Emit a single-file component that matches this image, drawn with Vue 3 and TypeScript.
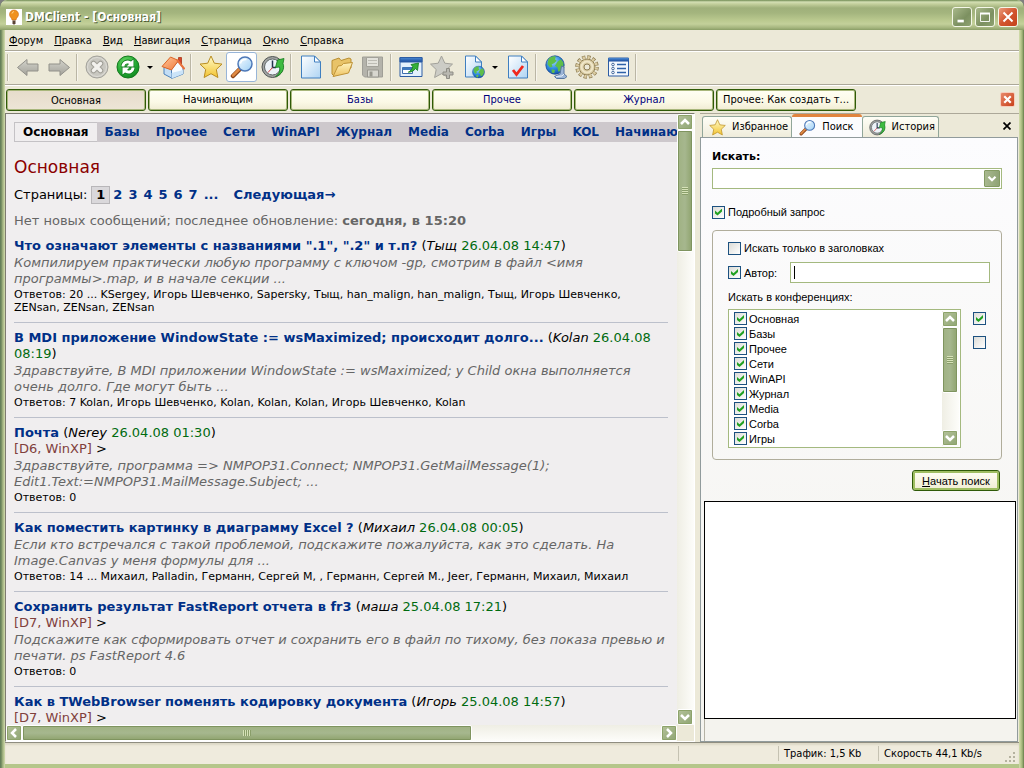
<script setup lang="ts">
import { ref } from 'vue'

interface Tool {
  kind: 'button' | 'sep' | 'drop'
  icon?: string
  label?: string
  active?: boolean
}
interface Topic {
  title: string
  author: string
  date: string
  system?: string
  body?: string
  replies?: string
}

const menu = [
  ['Ф', 'орум'],
  ['П', 'равка'],
  ['В', 'ид'],
  ['Н', 'авигация'],
  ['С', 'траница'],
  ['О', 'кно'],
  ['С', 'правка'],
]

const tools: Tool[] = [
  { kind: 'sep' },
  { kind: 'button', icon: 'back', label: 'Назад' },
  { kind: 'button', icon: 'forward', label: 'Вперёд' },
  { kind: 'sep' },
  { kind: 'button', icon: 'stop', label: 'Остановить' },
  { kind: 'button', icon: 'refresh', label: 'Обновить' },
  { kind: 'drop', label: 'Варианты обновления' },
  { kind: 'button', icon: 'home', label: 'Домой' },
  { kind: 'sep' },
  { kind: 'button', icon: 'star', label: 'Избранное' },
  { kind: 'button', icon: 'search', label: 'Поиск', active: true },
  { kind: 'button', icon: 'history', label: 'История' },
  { kind: 'sep' },
  { kind: 'button', icon: 'page', label: 'Создать' },
  { kind: 'button', icon: 'folder', label: 'Открыть' },
  { kind: 'button', icon: 'save', label: 'Сохранить' },
  { kind: 'sep' },
  { kind: 'button', icon: 'window', label: 'Новое окно' },
  { kind: 'button', icon: 'staradd', label: 'Добавить в избранное' },
  { kind: 'button', icon: 'pageglobe', label: 'Открыть в браузере' },
  { kind: 'drop', label: 'Выбор браузера' },
  { kind: 'button', icon: 'pagecheck', label: 'Отметить прочитанным' },
  { kind: 'sep' },
  { kind: 'button', icon: 'globe', label: 'Соединение' },
  { kind: 'button', icon: 'gear', label: 'Настройки' },
  { kind: 'button', icon: 'list', label: 'Свойства' },
  { kind: 'sep' },
]

const docs = ['Основная', 'Начинающим', 'Базы', 'Прочее', 'Журнал', 'Прочее: Как создать т...']
const forums = ['Базы', 'Прочее', 'Сети', 'WinAPI', 'Журнал', 'Media', 'Corba', 'Игры', 'KOL', 'Начинающим']
const pages = ['2', '3', '4', '5', '6', '7', '...']

const topics: Topic[] = [
  {
    title: 'Что означают элементы с названиями ".1", ".2" и т.п?',
    author: 'Тыщ',
    date: '26.04.08 14:47',
    body: 'Компилируем практически любую программу с ключом -gp, смотрим в файл <имя\nпрограммы>.map, и в начале секции ...',
    replies: 'Ответов: 20 ... KSergey, Игорь Шевченко, Sapersky, Тыщ, han_malign, han_malign, Тыщ, Игорь Шевченко,\nZENsan, ZENsan, ZENsan',
  },
  {
    title: 'В MDI приложение WindowState := wsMaximized; происходит долго...',
    author: 'Kolan',
    date: '26.04.08 08:19',
    body: 'Здравствуйте, В MDI приложении WindowState := wsMaximized; у Child окна выполняется\nочень долго. Где могут быть ...',
    replies: 'Ответов: 7 Kolan, Игорь Шевченко, Kolan, Kolan, Kolan, Игорь Шевченко, Kolan',
  },
  {
    title: 'Почта',
    author: 'Nerey',
    date: '26.04.08 01:30',
    system: '[D6, WinXP]',
    body: 'Здравствуйте, программа => NMPOP31.Connect; NMPOP31.GetMailMessage(1);\nEdit1.Text:=NMPOP31.MailMessage.Subject; ...',
    replies: 'Ответов: 0',
  },
  {
    title: 'Как поместить картинку в диаграмму Excel ?',
    author: 'Михаил',
    date: '26.04.08 00:05',
    body: 'Если кто встречался с такой проблемой, подскажите пожалуйста, как это сделать. На\nImage.Canvas у меня формулы для ...',
    replies: 'Ответов: 14 ... Михаил, Palladin, Германн, Сергей М, , Германн, Сергей М., Jeer, Германн, Михаил, Михаил',
  },
  {
    title: 'Сохранить результат FastReport отчета в fr3',
    author: 'маша',
    date: '25.04.08 17:21',
    system: '[D7, WinXP]',
    body: 'Подскажите как сформировать отчет и сохранить его в файл по тихому, без показа превью и\nпечати. ps FastReport 4.6',
    replies: 'Ответов: 0',
  },
  {
    title: 'Как в TWebBrowser поменять кодировку документа',
    author: 'Игорь',
    date: '25.04.08 14:57',
    system: '[D7, WinXP]',
  },
]

const query = ref('')
const detailed = ref(true)
const onlyTitles = ref(false)
const byAuthor = ref(true)
const author = ref('')
const conferences = ref(
  ['Основная', 'Базы', 'Прочее', 'Сети', 'WinAPI', 'Журнал', 'Media', 'Corba', 'Игры'].map((name) => ({
    name,
    on: true,
  })),
)
function setAll(on: boolean) {
  conferences.value.forEach((c) => (c.on = on))
}
</script>

<template>
  <svg class="defs" aria-hidden="true">
    <defs>
      <linearGradient id="gGray" x2="0" y2="1"><stop stop-color="#d3d3cb" /><stop offset="1" stop-color="#a3a29a" /></linearGradient>
      <linearGradient id="gPage" x2="1" y2="1"><stop stop-color="#ffffff" /><stop offset=".35" stop-color="#e3f0fb" /><stop offset="1" stop-color="#aed4f3" /></linearGradient>
      <linearGradient id="gStar" x2="0" y2="1"><stop stop-color="#fffbc8" /><stop offset="1" stop-color="#f3c431" /></linearGradient>
      <linearGradient id="gFold" x2="0" y2="1"><stop stop-color="#fff3bf" /><stop offset="1" stop-color="#edc362" /></linearGradient>
      <radialGradient id="gGreen" cx=".4" cy=".3" r=".8"><stop stop-color="#6fdc6c" /><stop offset=".6" stop-color="#22a832" /><stop offset="1" stop-color="#0b7f1c" /></radialGradient>
      <radialGradient id="gGlobe" cx=".4" cy=".3" r=".8"><stop stop-color="#a6dcff" /><stop offset=".5" stop-color="#2f8be0" /><stop offset="1" stop-color="#0d47a0" /></radialGradient>
      <linearGradient id="gLens" x2="1" y2="1"><stop stop-color="#f4fbff" /><stop offset="1" stop-color="#9fd0f5" /></linearGradient>
      <linearGradient id="gTitle" x2="0" y2="1"><stop stop-color="#4b8ad4" /><stop offset="1" stop-color="#1b4c9b" /></linearGradient>
      <linearGradient id="gRoof" x2="1" y2="1"><stop stop-color="#ffc79a" /><stop offset="1" stop-color="#f07a3c" /></linearGradient>
    </defs>
    <symbol id="i-back" viewBox="0 0 24 24">
      <path d="M1.500 12.500 11 4.500V9h11v7H11v4.500z" fill="url(#gGray)" stroke="#92918a" stroke-linejoin="round" />
    </symbol>
    <symbol id="i-forward" viewBox="0 0 24 24">
      <path d="M22.500 12.500 13 4.500V9H2v7h11v4.500z" fill="url(#gGray)" stroke="#92918a" stroke-linejoin="round" />
    </symbol>
    <symbol id="i-stop" viewBox="0 0 24 24">
      <circle cx="12" cy="12" r="11" fill="#c8c7c0" stroke="#a3a29b" />
      <circle cx="12" cy="12" r="9.500" fill="none" stroke="#deddd7" />
      <path d="m8.500 8.500 7 7m0-7-7 7" stroke="#a09f97" stroke-width="5.500" stroke-linecap="round" />
      <path d="m8.500 8.500 7 7m0-7-7 7" stroke="#f2f1ed" stroke-width="3.500" stroke-linecap="round" />
    </symbol>
    <symbol id="i-refresh" viewBox="0 0 24 24">
      <circle cx="12" cy="12" r="11" fill="url(#gGreen)" stroke="#16791f" />
      <g fill="#0f7d1c" stroke="#0f7d1c" stroke-width="1.500">
        <path d="M5.500 11.500C5.500 7 10.500 3.500 15 6.500L17.500 4.500v7h-7L13 9c-2-1.200-4.500 0-4.500 2.500z" />
        <path d="M18.500 12.500c0 4.500-5 8-9.500 5l-2.500 2v-7h7L11 15c2 1.200 4.500 0 4.500-2.500z" />
      </g>
      <g fill="#fff">
        <path d="M5.500 11.500C5.500 7 10.500 3.500 15 6.500L17.500 4.500v7h-7L13 9c-2-1.200-4.500 0-4.500 2.500z" />
        <path d="M18.500 12.500c0 4.500-5 8-9.500 5l-2.500 2v-7h7L11 15c2 1.200 4.500 0 4.500-2.500z" />
      </g>
    </symbol>
    <symbol id="i-home" viewBox="0 0 24 24">
      <path d="M3 12 10.500 14v9L3 19z" fill="#c3def5" stroke="#4a80bb" />
      <path d="M10.500 14 17 6.500l5 6v6.500l-11.500 4.500z" fill="#f6fbff" stroke="#4a80bb" />
      <path d="m10.500 18 11.500-3v4l-11.500 4.500z" fill="#cbe4f8" />
      <path d="M17.500 2.500h3V9l-3-3z" fill="#d8442a" stroke="#a93717" stroke-width=".8" />
      <path d="M1 11.500 9.500 2l8 3.500-7 9.500z" fill="url(#gRoof)" stroke="#db6426" stroke-linejoin="round" />
      <path d="m16.500 5.500 6.500 8" stroke="#e8713a" stroke-width="2" stroke-linecap="round" />
    </symbol>
    <symbol id="i-star" viewBox="0 0 24 24">
      <path d="m12 1 3.300 7.200 7.700.9-5.700 5.400 1.600 8L12 18.700 5.100 22.500l1.600-8L1 9.100l7.700-.9z" fill="url(#gStar)" stroke="#b98d22" stroke-linejoin="round" />
    </symbol>
    <symbol id="i-search" viewBox="0 0 24 24">
      <path d="m10 14-7 7" stroke="#8a4317" stroke-width="4.500" stroke-linecap="round" />
      <path d="m9.500 14-6.500 6.500" stroke="#e08a43" stroke-width="2.500" stroke-linecap="round" />
      <circle cx="15" cy="9" r="7" fill="url(#gLens)" stroke="#4d78b8" stroke-width="1.500" />
      <path d="M10.500 8.500c.5-3 3-4.500 6-4" fill="none" stroke="#fff" stroke-width="1.500" />
    </symbol>
    <symbol id="i-history" viewBox="0 0 24 24">
      <circle cx="11.500" cy="12" r="10.500" fill="#a2a4a3" stroke="#4f5454" />
      <circle cx="11.500" cy="12" r="8" fill="#edf3f8" stroke="#5e6666" />
      <path d="M11.500 5.500v7H15" fill="none" stroke="#22334c" stroke-width="1.500" />
      <path d="m11.500 12.500-4.500 5" stroke="#d63c3c" />
      <path d="M14.500 21.500c3.500-2 5-5.500 4-9.500l-4 .5L16.500 5l6.500-1.500-1 5c2 5-1 11.500-7.500 13z" fill="#3fbb41" stroke="#127a1c" stroke-width=".8" />
    </symbol>
    <symbol id="i-page" viewBox="0 0 24 24">
      <path d="M2.500 1h13l6 6v16h-19z" fill="url(#gPage)" stroke="#3f7fc0" />
      <path d="M15.500 1v6h6z" fill="#fff" stroke="#3f7fc0" />
    </symbol>
    <symbol id="i-folder" viewBox="0 0 24 24">
      <path d="M2 5.500 9 3l2 2.500L19 3l2 1v9L4 21 2 19z" fill="#e8c368" stroke="#b98e31" />
      <path d="M3 21.500 8 11l3.500-.5 2-2 9-1L18.500 18z" fill="url(#gFold)" stroke="#bf9336" />
    </symbol>
    <symbol id="i-save" viewBox="0 0 24 24">
      <path d="M1.500 2h20v20h-18l-2-2z" fill="#b4b3ab" stroke="#a09f97" />
      <path d="M5.500 2.500h12v9h-12z" fill="#e3e2db" stroke="#a2a199" />
      <path d="M7 5.500h9m-9 3h9" stroke="#bdbcb4" />
      <path d="M6.500 15h11v7h-11z" fill="#d8d7cf" stroke="#98978f" />
      <path d="M8.500 16.500h3v5h-3z" fill="#99988f" />
    </symbol>
    <symbol id="i-window" viewBox="0 0 24 24">
      <path d="M1 2.500h22v19H1z" fill="#e4f1fc" stroke="#2d5da4" />
      <path d="M1 2.500h22V7H1z" fill="url(#gTitle)" stroke="#2d5da4" />
      <path d="M3.500 12.500h10v6h-10z" fill="#fff" stroke="#3f6fae" />
      <path d="M3.500 12.500h10V15h-10z" fill="#3f78be" />
      <path d="m12 9.500 7.500-1.500-1 7.500-2-2c-1.700 2.500-4 3.700-7.200 3.700 2-1 3.700-3 4.500-5.500z" fill="#35b03a" stroke="#127a1c" stroke-width=".8" />
    </symbol>
    <symbol id="i-staradd" viewBox="0 0 24 24">
      <path d="m11.500 1 3.300 7.200 7.700.9-5.700 5.400 1.600 8-6.900-3.800-6.900 3.800 1.600-8L.5 9.100l7.700-.9z" fill="#ccccc6" stroke="#a3a29b" stroke-linejoin="round" />
      <path d="M16.500 13.500h3v3.500H23v3h-3.500v3.500h-3V20H13v-3h3.500z" fill="#b9b8b1" stroke="#8e8d85" />
    </symbol>
    <symbol id="i-worldball" viewBox="0 0 24 24">
      <circle cx="12" cy="12" r="11" fill="url(#gGlobe)" stroke="#1b4b93" />
      <path d="M4 5c3-3 6-4 9-3l-1 3 2 2-3 3-3 1 1 3-3 1-3-4zM15 8l4-3 3 4 0 5-3 5-3 1-1-5-3-2zM8 17l4 1-1 4-3-1z" fill="#5fbe4a" />
    </symbol>
    <symbol id="i-pageglobe" viewBox="0 0 24 24">
      <path d="M4.500 1h10l6 6v15h-16z" fill="url(#gPage)" stroke="#3f7fc0" />
      <path d="M14.500 1v6h6z" fill="#fff" stroke="#3f7fc0" />
      <use href="#i-worldball" x="11" y="10.500" width="13" height="13" />
    </symbol>
    <symbol id="i-pagecheck" viewBox="0 0 24 24">
      <path d="M2.500 1h13l6 6v16h-19z" fill="url(#gPage)" stroke="#3f7fc0" />
      <path d="M15.500 1v6h6z" fill="#fff" stroke="#3f7fc0" />
      <path d="m7 15 3.500 4.500L17 11" fill="none" stroke="#f0281c" stroke-width="2.800" />
    </symbol>
    <symbol id="i-globe" viewBox="0 0 24 24">
      <use href="#i-worldball" x="1" y="0" width="20" height="20" />
      <path d="m17.500 11 2.500 1v7l3 2.500-2.500 2h-8l-2-2 5.500-2.500z" fill="#9db6d8" stroke="#58779f" />
      <path d="m12 21.500 6-.5 2-2" fill="none" stroke="#e7eff8" />
    </symbol>
    <symbol id="i-gear" viewBox="0 0 24 24">
      <circle cx="12" cy="12" r="10" fill="none" stroke="#8b7a4f" stroke-width="3.500" stroke-dasharray="3.240 1.996" />
      <circle cx="12" cy="12" r="8" fill="#d8cba3" stroke="#8b7a4f" />
      <circle cx="12" cy="12" r="9.500" fill="none" stroke="#dccda3" stroke-width="3" stroke-dasharray="2.200 2.774" stroke-dashoffset="-.4" />
      <circle cx="12" cy="12" r="5.500" fill="none" stroke="#efe6c8" stroke-width="2" />
      <circle cx="12" cy="12" r="3" fill="#ece9d8" stroke="#8f7f57" />
    </symbol>
    <symbol id="i-list" viewBox="0 0 24 24">
      <path d="M2.500 3h20v18h-20z" fill="#f3f8fd" stroke="#2d5da4" />
      <path d="M2.500 3h20v3.500h-20z" fill="url(#gTitle)" />
      <path d="M11 9.500h9M11 13.500h9M11 17.500h9" stroke="#2f62a8" stroke-width="1.500" />
      <g fill="#fff" stroke="#44699c"><circle cx="7" cy="9.500" r="1.300" /><circle cx="7" cy="13.500" r="1.300" /><circle cx="7" cy="17.500" r="1.300" /></g>
    </symbol>
  </svg>

  <div class="window">
    <header class="titlebar">
      <svg class="app-icon" viewBox="0 0 16 16" aria-hidden="true">
        <path d="M0 0h16v16H0z" fill="#fff" />
        <path d="M8 1a4.500 4.500 0 0 1 4.500 4.500C12.500 8 10 9 10 11H6c0-2-2.500-3-2.500-5.500A4.500 4.500 0 0 1 8 1z" fill="#f0921e" stroke="#c96a10" stroke-width=".6" />
        <path d="M6 4.500c.3-1.200 1-1.700 2-1.800" stroke="#ffe0a0" fill="none" />
        <path d="M6.500 11.500h3v3l-1 1h-1l-1-1z" fill="#5a4335" />
      </svg>
      <h1>DMClient - [Основная]</h1>
      <button class="win-btn" aria-label="Свернуть"><svg viewBox="0 0 20 20"><path d="M5 13h7v3H5z" fill="#fff" /></svg></button>
      <button class="win-btn" aria-label="Развернуть"><svg viewBox="0 0 20 20"><path d="M5 6.500h10v8.500H5z" fill="none" stroke="#fff" /><path d="M4.500 5h11v2h-11z" fill="#fff" /></svg></button>
      <button class="win-btn close" aria-label="Закрыть"><svg viewBox="0 0 20 20"><path d="m5 5 10 10M15 5 5 15" stroke="#fff" stroke-width="2.200" /></svg></button>
    </header>

    <div class="client">
      <nav class="menu">
        <button v-for="m in menu" :key="m[0] + m[1]"><u>{{ m[0] }}</u>{{ m[1] }}</button>
      </nav>

      <div class="toolbar" role="toolbar" aria-label="Панель инструментов">
        <template v-for="(t, i) in tools" :key="i">
          <span v-if="t.kind === 'sep'" class="sep"></span>
          <button v-else-if="t.kind === 'drop'" class="drop" :aria-label="t.label"></button>
          <button v-else class="tool" :class="{ active: t.active }" :aria-label="t.label">
            <svg><use :href="'#i-' + t.icon" /></svg>
          </button>
        </template>
      </div>

      <div class="docs">
        <button v-for="(d, i) in docs" :key="d" class="doc" :class="{ current: i === 0, visited: i > 1 && i < 5 }">{{ d }}</button>
        <button class="doc-close" aria-label="Закрыть вкладку"><svg viewBox="0 0 12 12"><path d="m3 3 6 6m0-6-6 6" stroke="#fff" stroke-width="2" /></svg></button>
      </div>

      <div class="work">
        <main class="browser">
          <div class="page">
            <nav class="forums">
              <a class="here" href="#main">Основная</a>
              <a v-for="f in forums" :key="f" :href="'#' + f">{{ f }}</a>
            </nav>
            <h2>Основная</h2>
            <p class="pager">
              <span class="word">Страницы:</span>
              <b class="now">1</b>
              <a v-for="p in pages" :key="p" :href="'#p' + p">{{ p }}</a>
              <a class="next" href="#next">Следующая→</a>
            </p>
            <p class="news">Нет новых сообщений; последнее обновление: <b>сегодня, в 15:20</b></p>
            <article v-for="t in topics" :key="t.title" class="topic">
              <div class="head">
                <a :href="'#' + t.title">{{ t.title }}</a> (<i>{{ t.author }}</i> <time>{{ t.date }}</time>)
              </div>
              <div v-if="t.system"><span class="system">{{ t.system }}</span> &gt;</div>
              <p v-if="t.body" class="body">{{ t.body }}</p>
              <p v-if="t.replies" class="replies">{{ t.replies }}</p>
            </article>
          </div>
          <div class="vbar">
            <button class="arrow" aria-label="Вверх"><svg viewBox="0 0 14 14"><path d="m3 9 4-4 4 4" /></svg></button>
            <div class="thumb"></div>
            <button class="arrow end" aria-label="Вниз"><svg viewBox="0 0 14 14"><path d="m3 5 4 4 4-4" /></svg></button>
          </div>
          <div class="hbar">
            <button class="arrow" aria-label="Влево"><svg viewBox="0 0 14 14"><path d="M9 3 5 7l4 4" /></svg></button>
            <div class="thumb"></div>
            <button class="arrow end" aria-label="Вправо"><svg viewBox="0 0 14 14"><path d="m5 3 4 4-4 4" /></svg></button>
          </div>
        </main>

        <aside class="side">
          <div class="tabs" role="tablist">
            <button role="tab" class="tab"><svg><use href="#i-star" /></svg>Избранное</button>
            <button role="tab" class="tab on" aria-selected="true"><svg><use href="#i-search" /></svg>Поиск</button>
            <button role="tab" class="tab"><svg><use href="#i-history" /></svg>История</button>
            <button class="side-close" aria-label="Закрыть панель"><svg viewBox="0 0 8 8"><path d="m.5.5 7 7m0-7-7 7" stroke="#000" stroke-width="1.700" /></svg></button>
          </div>
          <form class="panel" @submit.prevent>
            <label class="caption" for="query">Искать:</label>
            <div class="combo">
              <select id="query" v-model="query"><option value=""></option></select>
              <svg viewBox="0 0 16 16" aria-hidden="true"><path d="m4 6 4 4 4-4" /></svg>
            </div>
            <label class="check detail"><input v-model="detailed" type="checkbox" />Подробный запрос</label>
            <fieldset>
              <label class="check"><input v-model="onlyTitles" type="checkbox" />Искать только в заголовках</label>
              <div class="author">
                <label class="check"><input v-model="byAuthor" type="checkbox" />Автор:</label>
                <div class="field"><span class="caret"></span><input v-model="author" type="text" aria-label="Автор" /></div>
              </div>
              <div id="conf" class="conf-title">Искать в конференциях:</div>
              <div class="conf-row">
                <div class="conf" role="group" aria-labelledby="conf">
                  <div class="conf-list">
                    <label v-for="c in conferences" :key="c.name" class="check"><input v-model="c.on" type="checkbox" />{{ c.name }}</label>
                  </div>
                  <div class="vbar small">
                    <button type="button" class="arrow" aria-label="Вверх"><svg viewBox="0 0 14 14"><path d="m3 9 4-4 4 4" /></svg></button>
                    <div class="thumb"></div>
                    <button type="button" class="arrow end" aria-label="Вниз"><svg viewBox="0 0 14 14"><path d="m3 5 4 4 4-4" /></svg></button>
                  </div>
                </div>
                <div class="all">
                  <input type="checkbox" checked aria-label="Выбрать все" @click.prevent="setAll(true)" />
                  <input type="checkbox" aria-label="Снять все" @click.prevent="setAll(false)" />
                </div>
              </div>
            </fieldset>
            <button type="submit" class="go"><u>Н</u>ачать поиск</button>
            <div class="results"></div>
            <div class="results-foot"></div>
          </form>
        </aside>
      </div>

      <footer class="status">
        <span></span>
        <span></span>
        <span>Трафик: 1,5 Kb</span>
        <span>Скорость 44,1 Kb/s</span>
        <svg class="grip" viewBox="0 0 12 12" aria-hidden="true"><path d="M8 0h2v2H8zM4 4h2v2H4zM8 4h2v2H8zM0 8h2v2H0zM4 8h2v2H4zM8 8h2v2H8z" fill="#b5b29f" /></svg>
      </footer>
    </div>
  </div>
</template>

<style>
body {
  background: #7f7f7f;
}
</style>

<style scoped>
* {
  box-sizing: border-box;
}
.defs {
  position: absolute;
  width: 0;
  height: 0;
}
button {
  font: inherit;
  color: inherit;
  background: none;
  border: 0;
  padding: 0;
  margin: 0;
}
p,
h1,
h2 {
  margin: 0;
}
.window {
  height: 100vh;
  display: flex;
  flex-direction: column;
  overflow: hidden;
  border-radius: 7px 7px 0 0;
  background: linear-gradient(90deg, #66805a 0, #66805a 1px, #8ea272 2px, #a5b683 3px, #d3dcae 5px, #d3dcae calc(100% - 5px), #b8c78b calc(100% - 3px), #8da068 calc(100% - 1px), #5d7643 100%);
  font: 11px/14px 'DejaVu Sans Condensed', 'Liberation Sans', sans-serif;
  color: #000;
}
.titlebar {
  flex: none;
  height: 30px;
  display: flex;
  align-items: center;
  gap: 3px;
  padding: 3px 6px 0;
  border-radius: 7px 7px 0 0;
  background: linear-gradient(#6f8a52 0, #d4dfb4 2px, #c3cf9c 4px, #9fb07a 8px, #a4b57e 13px, #b9c88e 20px, #c3d09a 24px, #a3b37c 28px, #8a9d66 30px);
}
.app-icon {
  width: 16px;
  height: 16px;
}
h1 {
  flex: 1;
  font: bold 12px/16px 'DejaVu Sans Condensed', 'Liberation Sans', sans-serif;
  color: #fff;
  text-shadow: 1px 1px 0 #4c5c35;
}
.win-btn {
  width: 20px;
  height: 20px;
  border: 1px solid #f4f7e8;
  border-radius: 3px;
  background: linear-gradient(135deg, #a9b98b, #7c9060 60%, #8fa271);
}
.win-btn svg {
  display: block;
  width: 18px;
  height: 18px;
}
.win-btn.close {
  background: linear-gradient(135deg, #eb9b7c, #d2552f 50%, #c4431c);
}
.client {
  flex: 1;
  min-height: 0;
  margin: 0 5px;
  display: flex;
  flex-direction: column;
  background: #ece9d8;
}
.menu {
  flex: none;
  height: 21px;
  display: flex;
  align-items: center;
  gap: 11px;
  padding: 2px 4px 0;
  border-bottom: 1px solid #aca899;
}
.toolbar {
  flex: none;
  height: 34px;
  display: flex;
  align-items: center;
  padding-bottom: 2px;
  border-top: 1px solid #fff;
  border-bottom: 1px solid #aca899;
}
.sep {
  flex: none;
  width: 2px;
  height: 27px;
  margin: 0 3px 0 2px;
  border-left: 1px solid #bab6a5;
  border-right: 1px solid #f7f5ec;
}
.tool {
  flex: none;
  display: grid;
  place-items: center;
  width: 31px;
  height: 30px;
  border-radius: 3px;
}
.tool.active {
  background: #fff;
  border: 1px solid #98b5d8;
}
.tool svg {
  width: 24px;
  height: 24px;
}
.drop {
  flex: none;
  display: grid;
  place-items: center;
  width: 14px;
  height: 30px;
}
.drop::after {
  content: '';
  border: 3px solid transparent;
  border-top-color: #000;
  border-bottom: 0;
}
.docs {
  flex: none;
  height: 28px;
  display: flex;
  align-items: center;
  gap: 2px;
  padding: 0 4px 0 1px;
  border-top: 1px solid #fff;
}
.doc {
  flex: 0 1 140px;
  height: 22px;
  white-space: nowrap;
  border: 1px solid #2f5a08;
  border-radius: 3px;
  box-shadow: inset 0 0 0 1px #a9b77c;
  background: linear-gradient(#fffff4, #fbf9e6 60%, #f0ecd3);
}
.doc.current {
  padding-top: 2px;
  background: linear-gradient(#e6dccb, #ede5d6);
}
.doc.visited {
  color: #00007c;
}
.doc-close {
  width: 15px;
  height: 15px;
  margin-left: auto;
  border: 1px solid #f6cdbd;
  border-radius: 2px;
  background: linear-gradient(135deg, #e8896a, #c8401a);
}
.doc-close svg {
  display: block;
}
.work {
  flex: 1;
  min-height: 0;
  display: flex;
  gap: 5px;
}
.browser {
  flex: 1;
  min-width: 0;
  display: grid;
  grid-template: minmax(0, 1fr) 16px / minmax(0, 1fr) 17px;
  border: 1px solid #7d7b70;
  border-width: 1px 1px 1px 1px;
  border-right-color: #fff;
  border-bottom-color: #fff;
}
.page {
  overflow: hidden;
  padding: 8px 8px 0;
  background: #f0eeef;
  font: 13px/16px Verdana, 'DejaVu Sans', sans-serif;
}
.page a {
  color: #003087;
  font-weight: bold;
  text-decoration: none;
}
.forums {
  display: flex;
  width: 760px;
  height: 20px;
  font-size: 12px;
  line-height: 20px;
  background: #cdc8cc;
}
.forums a {
  padding: 0 8px;
}
.forums .here {
  color: #000;
  line-height: 18px;
  background: #f0eeef;
  border: 1px solid #c4c2c5;
  border-right: 0;
}
h2 {
  margin-top: 15px;
  font: 17px/20px Verdana, 'DejaVu Sans', sans-serif;
  color: #8b0000;
}
.pager {
  display: flex;
  align-items: center;
  margin-top: 8px;
  height: 20px;
  gap: 6px;
}
.pager .now {
  padding: 0 4px;
  margin: 0 -3px 0 -2px;
  border: 1px solid #b8b6b9;
  background: #dad8db;
}
.pager .next {
  margin-left: 9px;
}
.news {
  margin: 8px 0 9px;
  color: #666;
}
.topic {
  padding-bottom: 7px;
  margin-bottom: 7px;
  width: 654px;
  border-bottom: 1px solid #bcc0cb;
}
.topic:last-child {
  border-bottom: 0;
}
.topic time {
  color: #006b10;
}
.system {
  color: #80403c;
}
.body {
  margin: 1px 0;
  color: #666;
  font-style: italic;
  white-space: pre;
}
.replies {
  padding-bottom: 1px;
  font-size: 11px;
  line-height: 13px;
  white-space: pre;
}
.vbar {
  display: flex;
  flex-direction: column;
  padding-right: 1px;
  background: linear-gradient(90deg, #efeee4, #fdfdfa);
}
.hbar {
  display: flex;
  background: linear-gradient(#efeee4, #fdfdfa);
}
.arrow {
  flex: none;
  width: 16px;
  height: 16px;
  border: 1px solid #fff;
  outline: 1px solid #8da36a;
  outline-offset: -2px;
  border-radius: 2px;
  background: linear-gradient(135deg, #b4c29a, #8fa573);
}
.arrow svg {
  display: block;
  fill: none;
  stroke: #fff;
  stroke-width: 2.5px;
}
.arrow.end {
  margin-top: auto;
}
.hbar .arrow.end {
  margin: 0 0 0 auto;
}
.thumb {
  display: grid;
  place-items: center;
  border: 1px solid #fff;
  outline: 1px solid #7f945f;
  outline-offset: -2px;
  border-radius: 2px;
  height: 122px;
  background: linear-gradient(90deg, #a0b283, #a6b78e 50%, #8fa36e);
}
.thumb::after {
  content: '';
  width: 6px;
  height: 8px;
  background: repeating-linear-gradient(#d6e2b8 0, #d6e2b8 1px, #8a9e6a 1px, #8a9e6a 2px);
}
.hbar .thumb {
  width: 67%;
  height: 16px;
  background: linear-gradient(#a0b283, #a6b78e 50%, #8fa36e);
}
.hbar .thumb::after {
  width: 8px;
  height: 6px;
  background: repeating-linear-gradient(90deg, #d6e2b8 0, #d6e2b8 1px, #8a9e6a 1px, #8a9e6a 2px);
}
.side {
  flex: 0 0 319px;
  display: flex;
  flex-direction: column;
  padding-right: 1px;
  border-top: 1px solid #aca899;
}
.tabs {
  flex: none;
  display: flex;
  align-items: flex-end;
  height: 23px;
  padding-left: 2px;
}
.tab {
  display: flex;
  align-items: center;
  gap: 6px;
  height: 21px;
  padding: 0 3px 0 6px;
  border: 1px solid #91a69a;
  border-bottom: 0;
  border-radius: 3px 3px 0 0;
  background: linear-gradient(#fefef6, #efecdb);
}
.tab svg {
  width: 17px;
  height: 17px;
}
.tab.on {
  height: 24px;
  padding: 0 8px 1px 7px;
  margin-bottom: -1px;
  border: 0;
  border-top: 3px solid #e0843f;
  background: #fcfcfe;
}
.side-close {
  margin: 0 7px 7px auto;
}
.side-close svg {
  display: block;
  width: 8px;
  height: 8px;
}
.panel {
  flex: 1;
  min-height: 0;
  display: flex;
  flex-direction: column;
  padding: 12px 3px 0;
  border: 1px solid #919b9c;
  background: linear-gradient(#fcfcfe, #f4f3ee);
  font: 11px/14px 'Liberation Sans', sans-serif;
}
.caption {
  margin: 0 8px;
  font: bold 11px/14px Verdana, 'DejaVu Sans', sans-serif;
}
.combo {
  display: grid;
  margin: 4px 12px 0 8px;
  height: 21px;
  border: 1px solid #a4b97f;
  background: #fff;
}
.combo select {
  grid-area: 1 / 1;
  appearance: none;
  border: 0;
  background: none;
}
.combo svg {
  grid-area: 1 / 1;
  justify-self: end;
  margin: 1px;
  width: 16px;
  height: 17px;
  pointer-events: none;
  border: 1px solid #839a62;
  border-radius: 1px;
  background: linear-gradient(90deg, #a8b88e, #8fa376);
  fill: none;
  stroke: #fff;
  stroke-width: 2.5px;
}
.check {
  display: flex;
  align-items: center;
  gap: 3px;
  white-space: nowrap;
}
input[type='checkbox'] {
  flex: none;
  appearance: none;
  display: grid;
  place-items: center;
  width: 13px;
  height: 13px;
  margin: 0;
  border: 1px solid #1c5180;
  background: linear-gradient(135deg, #dcdcd7, #fff);
}
input[type='checkbox']:checked::after {
  content: '';
  width: 7px;
  height: 7px;
  background: #21a121;
  clip-path: polygon(0 28%, 36% 60%, 100% 0, 100% 42%, 36% 100%, 0 70%);
}
.detail {
  margin: 16px 8px 0;
}
fieldset {
  min-width: 0;
  margin: 11px 12px 0 8px;
  padding: 10px 11px 11px 15px;
  border: 1px solid #b0ad9b;
  border-radius: 4px;
}
.author {
  display: flex;
  align-items: center;
  justify-content: space-between;
  margin-top: 7px;
}
.field {
  display: flex;
  align-items: center;
  width: 200px;
  height: 21px;
  padding-left: 3px;
  border: 1px solid #a4b97f;
  background: #fff;
}
.field input {
  flex: 1;
  min-width: 0;
  border: 0;
  padding: 0;
  outline: 0;
  font: inherit;
  background: none;
}
.caret {
  width: 1px;
  height: 13px;
  background: #000;
}
.conf-title {
  margin: 7px 0 5px;
}
.conf-row {
  display: flex;
  gap: 12px;
}
.conf {
  flex: 1;
  display: flex;
  height: 139px;
  padding: 1px;
  border: 1px solid #a4b97f;
  background: #fff;
}
.conf-list {
  flex: 1;
  overflow: hidden;
  padding: 0 4px;
}
.conf-list .check {
  gap: 2px;
  height: 15px;
}
.vbar.small .thumb {
  height: 66px;
}
.all {
  display: flex;
  flex-direction: column;
  gap: 11px;
  margin: 3px 4px 0 0;
}
.go {
  align-self: flex-end;
  width: 88px;
  height: 21px;
  margin: 10px 14px 10px 0;
  border: 1px solid #2f5a08;
  border-radius: 3px;
  box-shadow: inset 0 0 0 2px #9fbe62;
  background: linear-gradient(#fffff4, #f0ecd3);
}
.results {
  flex: 1;
  margin-right: -2px;
  border: 1px solid #000;
  background: #fff;
}
.results-foot {
  height: 22px;
  border-left: 1px solid #b5b2a5;
  background: #f4f3ee;
}
.status {
  flex: none;
  display: grid;
  grid-template-columns: minmax(0, 1fr) 100px 100px 127px 14px;
  height: 26px;
  align-items: center;
  border-top: 1px solid #8f8d80;
  box-shadow: inset 0 2px 2px #dcd8c6;
  border-bottom: 4px solid #b5c68a;
  background: #efebdd;
}
.status span {
  height: 15px;
  line-height: 15px;
  padding-left: 5px;
}
.status span + span {
  border-left: 1px solid #c5c2b2;
}
.grip {
  width: 12px;
  height: 12px;
  align-self: end;
}
</style>
